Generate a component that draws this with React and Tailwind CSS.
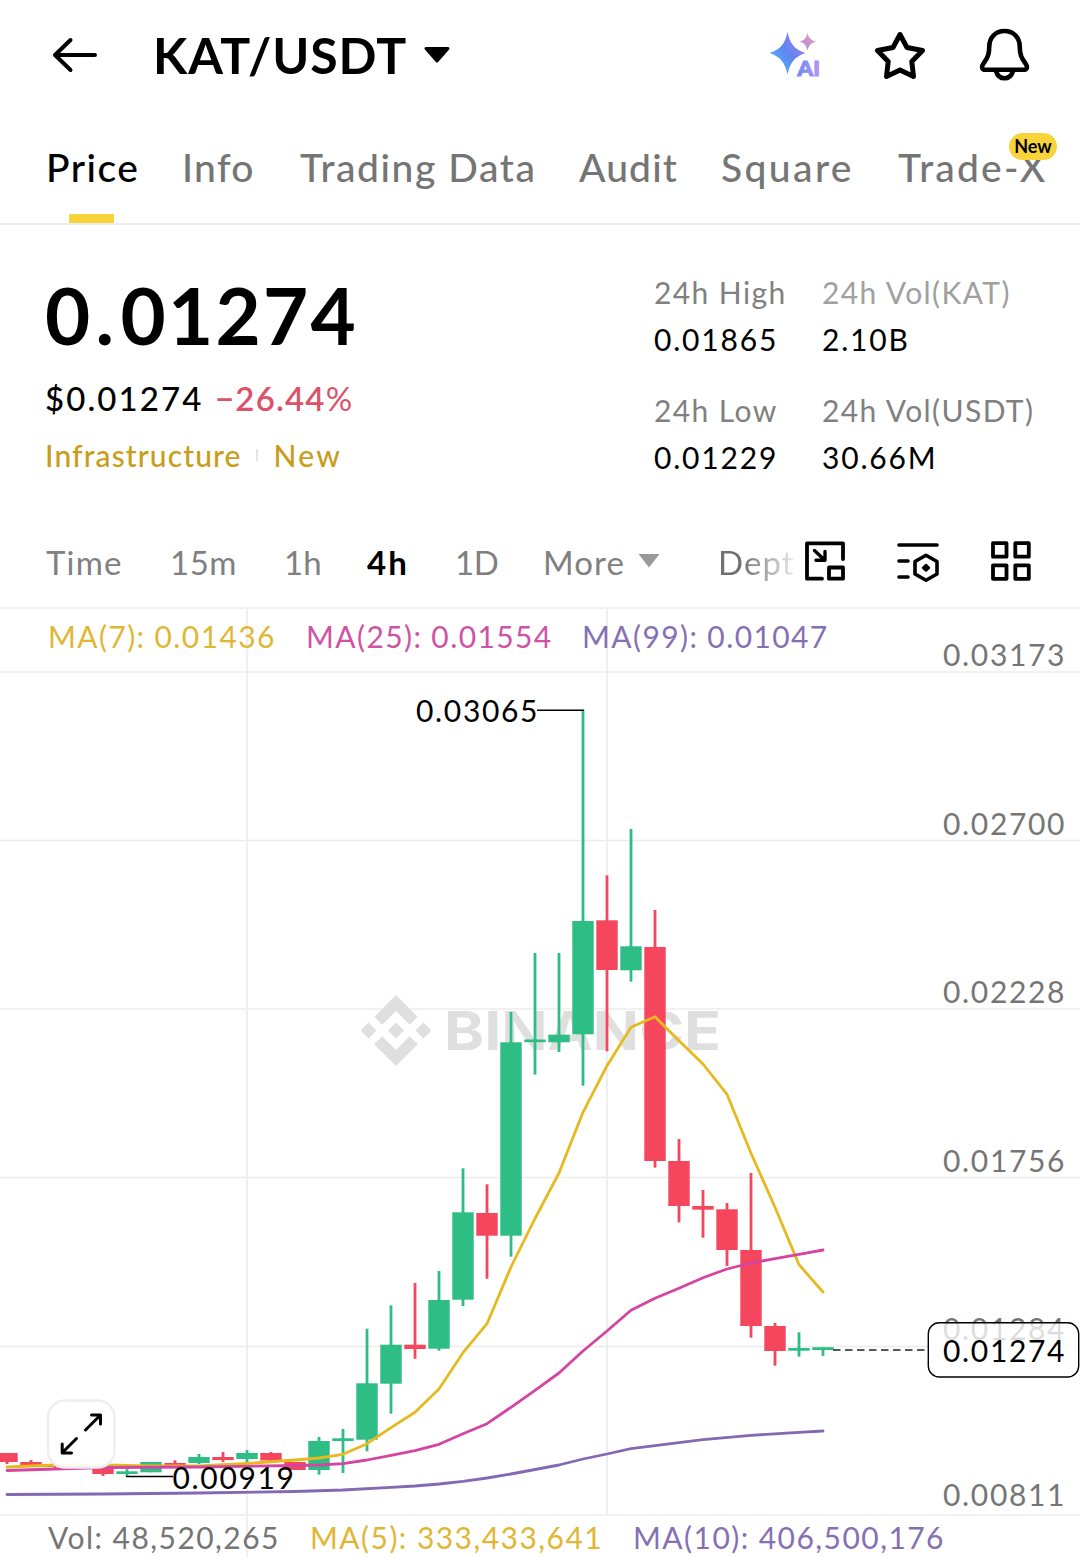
import React from "react";
import { SiBinance } from "react-icons/si";

const GREEN = "#2ebd85";
const RED = "#f6465d";

const tabs = [
  { label: "Price", width: "w-[136px]", tracking: "tracking-[1.5px]", active: true },
  { label: "Info", width: "w-[118px]", tracking: "tracking-[1.3px]" },
  { label: "Trading Data", width: "w-[279px]", tracking: "tracking-[1.55px]" },
  { label: "Audit", width: "w-[142px]", tracking: "tracking-[1.1px]" },
  { label: "Square", width: "w-[177px]", tracking: "tracking-[2.4px]" },
  { label: "Trade-X", width: "w-[150px]", tracking: "tracking-[2.2px]", badge: "New" },
];

const intervals = [
  { label: "Time", width: "w-[124px]", tracking: "tracking-[1.2px]" },
  { label: "15m", width: "w-[114px]", tracking: "tracking-[0.5px]" },
  { label: "1h", width: "w-[83px]", tracking: "tracking-[0px]" },
  { label: "4h", width: "w-[88px]", tracking: "tracking-[2px]", active: true },
  { label: "1D", width: "w-[88px]", tracking: "tracking-[-0.5px]" },
];

// one candle every 24px: [up, high, bodyTop, bodyBottom, low]
const candles = [
  [0, 1453, 1453, 1462, 1464],
  [0, 1460, 1462, 1465, 1467],
  [0, 1463, 1464, 1467, 1468],
  [0, 1464, 1465, 1468, 1469],
  [0, 1466, 1467, 1474, 1476],
  [1, 1469, 1471.3, 1474, 1476.7],
  [1, 1462, 1462, 1472.3, 1472.3],
  [0, 1460.3, 1463, 1466, 1467],
  [1, 1454, 1457, 1463, 1464],
  [0, 1452, 1457, 1460, 1462],
  [1, 1450, 1453, 1459, 1462],
  [0, 1452, 1453, 1460.5, 1461],
  [0, 1462, 1462, 1470, 1470],
  [1, 1437, 1441, 1470, 1474.7],
  [1, 1429, 1438.3, 1441, 1473],
  [1, 1328.7, 1383.3, 1439.7, 1451.3],
  [1, 1305.3, 1344.7, 1383.7, 1413.7],
  [0, 1283, 1344.7, 1349, 1358.7],
  [1, 1271, 1300, 1348.7, 1350.7],
  [1, 1168.3, 1212.3, 1299.7, 1306],
  [0, 1184.3, 1213, 1235.7, 1278.7],
  [1, 1012, 1042.3, 1235.7, 1256.7],
  [1, 953, 1039.5, 1042.2, 1074.7],
  [1, 953, 1034.7, 1042.3, 1052],
  [1, 710, 921, 1034.3, 1085.7],
  [0, 875.3, 920.3, 970, 1051.3],
  [1, 829, 946.3, 970.3, 981.7],
  [0, 910, 947, 1161, 1167.7],
  [0, 1139, 1161, 1206, 1222.3],
  [0, 1190, 1206, 1209.7, 1237.7],
  [0, 1203, 1209.3, 1250, 1266],
  [0, 1173, 1250, 1326, 1337.7],
  [0, 1323, 1326, 1351, 1365.7],
  [1, 1332.3, 1348, 1350.7, 1356.7],
  [1, 1347.2, 1347.2, 1350, 1356],
];

const ma7 =
  "7,1467 55,1465 103,1465 151,1466 199,1466 247,1463.5 295,1460 319,1458 343,1454.3 367,1443.7 391,1427.7 415,1412.3 439,1389 463,1352.7 487,1323.7 511,1267 535,1218.5 559,1173 583,1112.3 607,1065.7 631,1027.3 655,1016.7 679,1040.7 703,1064 727,1094.3 751,1153.3 775,1207.3 799,1264.7 823,1292";
const ma25 =
  "7,1470.5 55,1469 103,1467.5 199,1467 295,1465.5 319,1465 343,1463.7 367,1460 391,1455.3 415,1450.7 439,1444.3 463,1433.7 487,1423.7 511,1407.3 535,1390.3 559,1373 583,1351 607,1331 631,1310.3 655,1298.3 679,1288.3 703,1277.7 727,1269 751,1263 775,1258.7 799,1254.3 823,1250";
const ma99 =
  "7,1494.5 103,1494 199,1493 295,1491.5 343,1490 391,1487.3 415,1486 439,1484 463,1481.3 487,1478 511,1474 535,1469.5 559,1465 583,1459 607,1454 631,1448.7 655,1445.7 703,1439.7 751,1435.3 799,1432.3 823,1431";

const axisLabels = [
  { text: "0.03173", y: 666 },
  { text: "0.02700", y: 835 },
  { text: "0.02228", y: 1003 },
  { text: "0.01756", y: 1172 },
  { text: "0.01284", y: 1339.5 },
  { text: "0.00811", y: 1506 },
];

function AiIcon() {
  return (
    <svg width="52" height="52" viewBox="769 29 52 52">
      <defs>
        <linearGradient id="spark" x1="0" y1="1" x2="1" y2="0">
          <stop offset="0.2" stopColor="#4fb0f8" />
          <stop offset="0.5" stopColor="#5f86ef" />
          <stop offset="1" stopColor="#a77cf5" />
        </linearGradient>
        <linearGradient id="sparkSmall" x1="0" y1="1" x2="1" y2="0">
          <stop offset="0.2" stopColor="#b48cf0" />
          <stop offset="1" stopColor="#f0a08c" />
        </linearGradient>
        <linearGradient id="aiText" x1="0" y1="0" x2="1" y2="0">
          <stop offset="0" stopColor="#6a8df5" />
          <stop offset="1" stopColor="#b794f0" />
        </linearGradient>
      </defs>
      <path d="M787.500 32C790 43.500 794 49 805.500 53C794 57 790 63 787.500 74.500C785 63 781 57 769.500 53C781 49 785 43.500 787.500 32Z" fill="url(#spark)" />
      <path d="M807.500 33C809 38.500 811 40.300 816.500 41.500C811 43 809 45 807.500 50.500C806 45 804.500 43 799.500 41.500C804.500 40.300 806 38.500 807.500 33Z" fill="url(#sparkSmall)" />
      <text x="797.500" y="76.300" fontSize="20" fontWeight="900" textLength="22.500" lengthAdjust="spacingAndGlyphs" fill="url(#aiText)" stroke="url(#aiText)" strokeWidth="1" className="font-['Lato',sans-serif]">AI</text>
    </svg>
  );
}

function Header() {
  return (
    <header className="flex h-[110px] items-center pr-[49px] pl-[51px]">
      <svg width="48" height="40" viewBox="51 35 48 40" fill="none" stroke="#000" strokeWidth="4" strokeLinecap="round" strokeLinejoin="round">
        <path d="M95 55H55M70.500 40L55 55L70.500 70" />
      </svg>
      <h1 className="ml-[54px] text-[50px] leading-none font-bold tracking-[0.9px]">KAT/USDT</h1>
      <svg className="ml-[16px]" width="28" height="20" viewBox="0 0 28 20">
        <path d="M3 3.500H25L14 16Z" fill="#000" stroke="#000" strokeWidth="3" strokeLinejoin="round" />
      </svg>
      <div className="ml-auto flex items-center gap-[53px]">
        <AiIcon />
        <svg width="52" height="52" viewBox="874 29 52 52" fill="none" stroke="#000" strokeWidth="5" strokeLinejoin="round">
          <path d="M900 34.500L907 47.500L922.500 50.500L911.800 61.500L913.500 76.500L900 70L886.500 76.500L888.200 61.500L877.500 50.500L893 47.500Z" />
        </svg>
        <svg width="52" height="54" viewBox="979 28 52 54" fill="none" stroke="#000" strokeWidth="4.600" strokeLinejoin="round">
          <path d="M1004.500 31C995 31 989.500 38 989.300 46C989.200 54 988 57.500 983.500 63.500C981 67 982 69.700 985.500 69.700H1023.500C1027 69.700 1028 67 1025.500 63.500C1021 57.500 1019.800 54 1019.700 46C1019.500 38 1014 31 1004.500 31Z" />
          <path d="M996 71C997.500 76 1000.500 78.300 1004.500 78.300C1008.500 78.300 1011.500 76 1013 71" />
        </svg>
      </div>
    </header>
  );
}

function Tabs() {
  return (
    <nav className="flex h-[115px] border-b-2 border-[#eeeeee] pl-[46px]">
      {tabs.map((tab) => (
        <div
          key={tab.label}
          className={`relative flex h-full shrink-0 flex-col justify-between whitespace-nowrap ${tab.width} ${tab.active ? "text-black" : "text-[#757575]"}`}
        >
          <span className={`pt-[33px] text-[39px] leading-[48px] font-medium ${tab.tracking}`}>{tab.label}</span>
          {tab.active && <span className="ml-[23px] h-[9px] w-[45px] bg-[#f8d33a]" />}
          {tab.badge && (
            <span className="absolute top-[23px] left-[111px] flex h-[27px] w-[48px] items-center justify-center rounded-full bg-[#f8d33a] text-[18px] font-bold text-black">
              {tab.badge}
            </span>
          )}
        </div>
      ))}
    </nav>
  );
}

function Stat({ label, value, light }) {
  return (
    <div className="whitespace-nowrap">
      <p className={`text-[30px] leading-[47px] tracking-[1.4px] ${light ? "text-[#a0a0a0]" : "text-[#808080]"}`}>{label}</p>
      <p className="text-[30px] leading-[47px] tracking-[1.8px]">{value}</p>
    </div>
  );
}

function Summary() {
  return (
    <section className="flex h-[293px] pl-[45px]">
      <div className="w-[609px]">
        <p className="pt-[40px] text-[78px] leading-[100px] font-bold tracking-[2.3px]">
          0<span className="pr-[4px] pl-[3px]">.</span>01274
        </p>
        <p className="mt-[7px] flex text-[33px] leading-[52px] font-medium whitespace-nowrap">
          <span className="w-[170px] tracking-[2.1px]">$0.01274</span>
          <span className="font-semibold tracking-[1.2px] text-[#dc5268]">−26.44<span className="font-normal">%</span></span>
        </p>
        <p className="mt-[5px] flex items-center text-[30px] leading-[52px] font-medium tracking-[1.1px] text-[#c99d1c]">
          Infrastructure
          <span className="mr-[16px] ml-[14px] h-[12px] w-[2px] bg-[#e4e4e4]" />
          <span className="tracking-[2.2px]">New</span>
        </p>
      </div>
      <div className="grid grid-cols-[168px_1fr] content-start gap-y-[24px] pt-[44px]">
        <Stat label="24h High" value="0.01865" />
        <Stat label="24h Vol(KAT)" value="2.10B" light />
        <Stat label="24h Low" value="0.01229" />
        <Stat label="24h Vol(USDT)" value="30.66M" />
      </div>
    </section>
  );
}

function Toolbar() {
  return (
    <div className="flex h-[91px] items-center border-b-2 border-[#f2f2f2] pl-[46px] text-[33px] text-[#808080]">
      {intervals.map((item) => (
        <span key={item.label} className={`shrink-0 ${item.tracking} ${item.width} ${item.active ? "font-bold text-black" : ""}`}>
          {item.label}
        </span>
      ))}
      <span className="flex w-[175px] shrink-0 items-center tracking-[1.1px]">
        More
        <svg className="-mt-[3px] ml-[13px]" width="22" height="16" viewBox="0 0 22 16">
          <path d="M0.500 1H21.500L11 14.500Z" fill="#999" />
        </svg>
      </span>
      <span className="w-[77px] shrink-0 bg-linear-to-r from-[#707070] from-30% to-[#eeeeee] bg-clip-text tracking-[1.1px] whitespace-nowrap text-transparent">
        Dept
      </span>
      <div className="-mt-[3px] ml-[8px] flex items-center gap-[49px]">
        <svg width="44" height="44" viewBox="803 539 44 44" fill="none" stroke="#000" strokeWidth="3.800" strokeLinecap="round" strokeLinejoin="round">
          <path d="M822 578.700H807V543.300H843V559" />
          <path d="M814.500 550.500L824 559.500M816 560.300H825V551.500" strokeWidth="3.400" />
          <rect x="829" y="567.500" width="14" height="11.200" />
        </svg>
        <svg width="44" height="46" viewBox="896 538 44 46" fill="none" stroke="#000" strokeWidth="3.600" strokeLinecap="round" strokeLinejoin="round">
          <path d="M899 545H937M899 561H908M899 577H908" />
          <path d="M926 555.200L937 561.500V574L926 580.200L915 574V561.500Z" />
          <path d="M926 565L929 567.800L926 570.600L923 567.800Z" fill="#000" strokeWidth="2.400" />
        </svg>
        <svg width="44" height="44" viewBox="989 539 44 44" fill="none" stroke="#000" strokeWidth="3.800" strokeLinejoin="round">
          <rect x="993" y="543.200" width="13.500" height="13.500" />
          <rect x="1015.300" y="543.200" width="13.500" height="13.500" />
          <rect x="993" y="565.300" width="13.500" height="13.500" />
          <rect x="1015.300" y="565.300" width="13.500" height="13.500" />
        </svg>
      </div>
    </div>
  );
}

function Chart() {
  return (
    <svg className="block font-['Lato',sans-serif]" width="1080" height="948" viewBox="0 609 1080 948">
      <g stroke="#ececec" strokeWidth="1.600">
        {[672, 840.5, 1009, 1177.500, 1346.500, 1515].map((y) => (
          <line key={y} x1="0" x2="1080" y1={y} y2={y} />
        ))}
        <line x1="247" x2="247" y1="609" y2="1557" />
        <line x1="607" x2="607" y1="609" y2="1515" />
      </g>

      <SiBinance x="360.500" y="995" size={71} color="#dfdfdf" />
      <text x="444" y="1049.500" fontSize="54" fontWeight="700" fill="#dfdfdf" textLength="277" lengthAdjust="spacingAndGlyphs" className="font-['Inter',sans-serif]">BINANCE</text>

      <g fontSize="30" fill="#757575">
        {axisLabels.map((label) => (
          <text key={label.text} x="943" y={label.y} textLength="121.500">{label.text}</text>
        ))}
      </g>

      {candles.map(([up, high, top, bottom, low], i) => {
        const x = 7 + i * 24;
        const color = up ? GREEN : RED;
        return (
          <g key={i} fill={color}>
            <rect x={x - 1.4} y={high} width="2.800" height={low - high} />
            <rect x={x - 10.7} y={top} width="21.400" height={bottom - top} />
          </g>
        );
      })}

      <g fill="none" strokeWidth="2.800" strokeLinecap="round" strokeLinejoin="round">
        <polyline points={ma99} stroke="#8468b4" />
        <polyline points={ma7} stroke="#e6b91e" />
        <polyline points={ma25} stroke="#d444a0" />
      </g>

      <g fontSize="30" stroke="none">
        <text x="416" y="722" textLength="121.500">0.03065</text>
        <text x="172.500" y="1489" textLength="121.500">0.00919</text>
      </g>
      <path d="M537 710.300H584M126 1476.600H173" stroke="#000" strokeWidth="1.500" />

      {/* last price */}
      <line x1="833" x2="928" y1="1350" y2="1350" stroke="#222" strokeWidth="1.700" strokeDasharray="7.500 4.500" />
      <rect x="928.300" y="1322.800" width="150.400" height="54.200" rx="11" fill="#fff" fillOpacity="0.75" stroke="#000" strokeWidth="1.400" />
      <text x="943" y="1362" fontSize="30" textLength="121.500">0.01274</text>

      {/* expand button */}
      <rect x="48" y="1400.500" width="66.500" height="67" rx="17" fill="#fff" fillOpacity="0.92" stroke="#eeeeee" strokeWidth="2.500" />
      <path
        d="M85.500 1430L100 1415.500M91.500 1415H100.500V1424M76.500 1438.500L62.500 1452.500M62.200 1444V1453H71.500"
        fill="none"
        stroke="#000"
        strokeWidth="3"
        strokeLinecap="round"
        strokeLinejoin="round"
      />
    </svg>
  );
}

export default function App() {
  return (
    <main className="h-[1557px] w-[1080px] overflow-hidden bg-white font-['Lato',sans-serif] text-black">
      <Header />
      <Tabs />
      <Summary />
      <Toolbar />
      <section className="relative">
        <Chart />
        <div className="absolute top-[5px] left-[48px] flex text-[30px] leading-[44px] tracking-[1.4px] whitespace-nowrap">
          <span className="w-[258px] text-[#dfb735]">MA(7): 0.01436</span>
          <span className="w-[276px] text-[#cf52a4]">MA(25): 0.01554</span>
          <span className="text-[#8570b4]">MA(99): 0.01047</span>
        </div>
        <div className="absolute bottom-[-2px] left-[48px] flex text-[30px] leading-[44px] tracking-[1.45px] whitespace-nowrap">
          <span className="w-[262px] text-[#757575]">Vol: 48,520,265</span>
          <span className="w-[323px] text-[#dfb735]">MA(5): 333,433,641</span>
          <span className="text-[#8570b4]">MA(10): 406,500,176</span>
        </div>
      </section>
    </main>
  );
}
